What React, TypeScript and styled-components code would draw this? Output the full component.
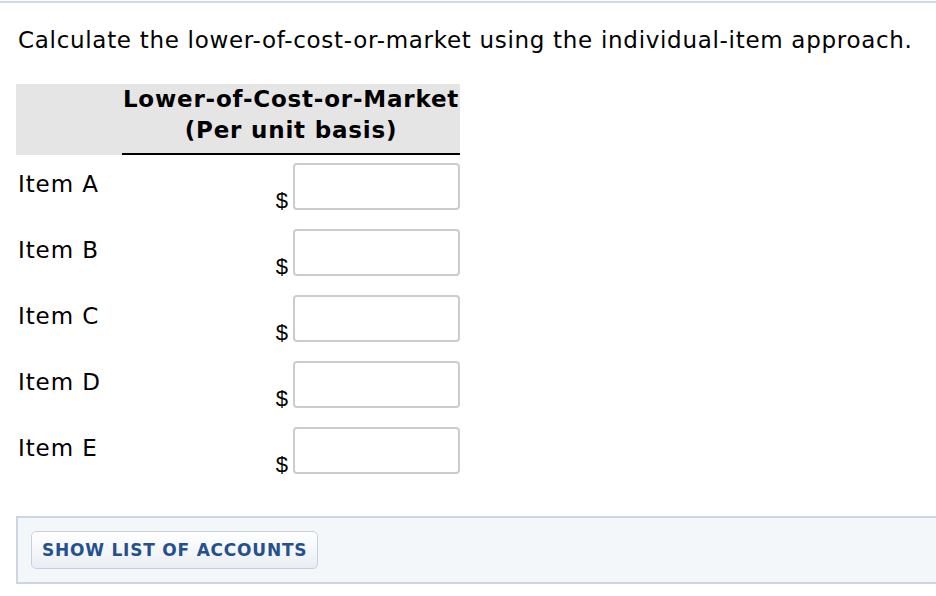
import React, { useState } from "react";
import styled, { createGlobalStyle } from "styled-components";

const GlobalStyle = createGlobalStyle`
    html, body {
        margin: 0;
        padding: 0;
        background: #ffffff;
    }
    body {
        font-family: Verdana, "DejaVu Sans", sans-serif;
        color: #000000;
    }
`;

const items = ["Item A", "Item B", "Item C", "Item D", "Item E"];

const App: React.FC = () => {
    const [values, setValues] = useState<string[]>(items.map(() => ""));

    const handleChange = (idx: number) => (e: React.ChangeEvent<HTMLInputElement>) => {
        const next = [...values];
        next[idx] = e.target.value;
        setValues(next);
    };

    return (
        <Page>
            <GlobalStyle />
            <TopRule />
            <Question>Calculate the lower-of-cost-or-market using the individual-item approach.</Question>
            <Table>
                <HeaderRow>
                    <LabelHead />
                    <ValueHead>
                        Lower-of-Cost-or-Market
                        <br />
                        (Per unit basis)
                    </ValueHead>
                </HeaderRow>
                {items.map((item, idx) => (
                    <ItemRow key={item}>
                        <ItemLabel>{item}</ItemLabel>
                        <ValueCell>
                            <Dollar>$</Dollar>
                            <AmountInput value={values[idx]} onChange={handleChange(idx)} />
                        </ValueCell>
                    </ItemRow>
                ))}
            </Table>
            <AccountsPanel>
                <BtnAccounts>SHOW LIST OF ACCOUNTS</BtnAccounts>
            </AccountsPanel>
        </Page>
    );
};

const Page = styled.div`
    width: 936px;
    height: 596px;
    overflow: hidden;
    padding-top: 1px;
    box-sizing: border-box;
`;

const TopRule = styled.div`
    height: 2px;
    background-color: #d3d9e3;
`;

const Question = styled.p`
    margin: 24px 0 0 18px;
    font-size: 23px;
    letter-spacing: 0.7px;
    line-height: 26px;
    white-space: nowrap;
`;

const Table = styled.div`
    margin: 31px 0 0 16px;
    width: 444px;
`;

const HeaderRow = styled.div`
    display: flex;
    height: 71px;
    background-color: #e5e5e5;
`;

const LabelHead = styled.div`
    width: 106px;
`;

const ValueHead = styled.div`
    flex: 1;
    box-sizing: border-box;
    border-bottom: 2px solid #000000;
    text-align: center;
    font-weight: bold;
    font-size: 23px;
    letter-spacing: 0.8px;
    line-height: 31px;
    white-space: nowrap;
`;

const ItemRow = styled.div`
    display: flex;
    justify-content: space-between;
    height: 66px;
`;

const ItemLabel = styled.div`
    padding: 16px 0 0 2px;
    font-size: 23px;
    letter-spacing: 0.9px;
    line-height: 26px;
`;

const ValueCell = styled.div`
    display: flex;
    align-items: flex-end;
    height: 47px;
    margin-top: 8px;
`;

const Dollar = styled.span`
    font-family: "Liberation Sans", Arial, sans-serif;
    font-size: 22px;
    line-height: 22px;
    margin-right: 5px;
    margin-bottom: -2px;
`;

const AmountInput = styled.input`
    width: 167px;
    height: 47px;
    box-sizing: border-box;
    border: 2px solid #cccccc;
    border-radius: 4px;
    padding: 0 8px;
    font-size: 18px;
    font-family: "Liberation Sans", Arial, sans-serif;
    outline: none;
`;

const AccountsPanel = styled.div`
    margin: 31px -10px 0 16px;
    height: 68px;
    box-sizing: border-box;
    padding: 13px 0 0 13px;
    border: 2px solid #cdd5e0;
    background-color: #f4f7fa;
`;

const BtnAccounts = styled.button`
    height: 38px;
    padding: 0 10px;
    border: 1px solid #c7d1de;
    border-radius: 5px;
    background: linear-gradient(#ffffff, #e9eef4);
    color: #24508d;
    font-family: Verdana, "DejaVu Sans", sans-serif;
    font-weight: bold;
    font-size: 17px;
    letter-spacing: 0.78px;
    cursor: pointer;
`;

export default App;
